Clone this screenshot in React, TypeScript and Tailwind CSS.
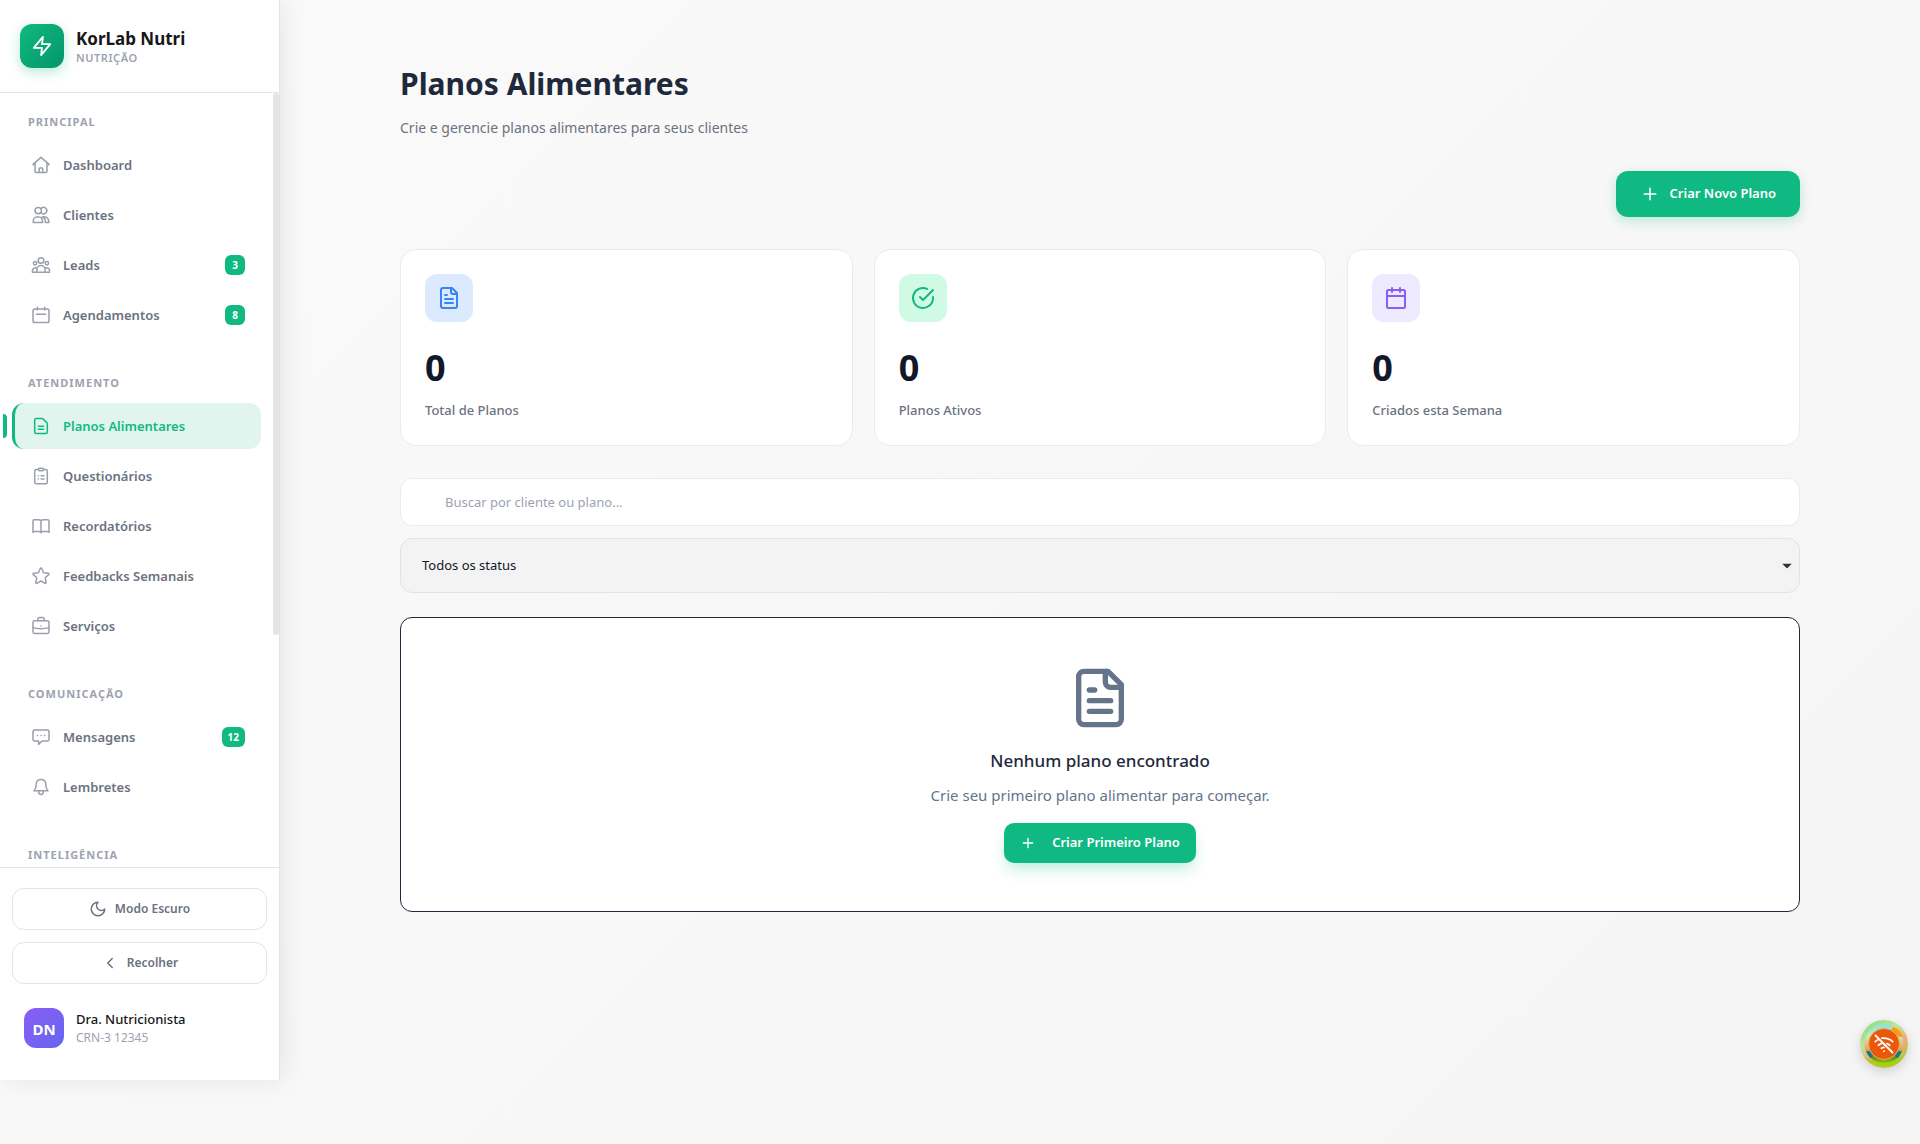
import { useState, type ReactNode } from "react";

type IconProps = { className?: string; children: ReactNode };

function NavIcon({ className = "", children }: IconProps) {
  return (
    <svg
      viewBox="0 0 20 20"
      className={`size-5 shrink-0 ${className}`}
      fill="none"
      stroke="currentColor"
      strokeWidth="1.5"
      strokeLinecap="round"
      strokeLinejoin="round"
      aria-hidden="true"
    >
      {children}
    </svg>
  );
}

function Icon24({ className = "", children, width = 2 }: IconProps & { width?: number }) {
  return (
    <svg
      viewBox="0 0 24 24"
      className={`shrink-0 ${className}`}
      fill="none"
      stroke="currentColor"
      strokeWidth={width}
      strokeLinecap="round"
      strokeLinejoin="round"
      aria-hidden="true"
    >
      {children}
    </svg>
  );
}

const fileText = (
  <>
    <path d="M15 2H6a2 2 0 0 0-2 2v16a2 2 0 0 0 2 2h12a2 2 0 0 0 2-2V7Z" />
    <path d="M14 2v4a2 2 0 0 0 2 2h4" />
    <path d="M10 9H8M16 13H8M16 17H8" />
  </>
);

const calendar = (
  <>
    <path d="M8 2v4M16 2v4" />
    <rect x="3" y="4" width="18" height="18" rx="1.5" />
    <path d="M3 10h18" />
  </>
);

const circleCheck = (
  <>
    <path d="M22 11.08V12a10 10 0 1 1-5.93-9.14" />
    <path d="m22 4-10 10.01-3-3" />
  </>
);

type Item = { label: string; icon: ReactNode; badge?: number; active?: boolean };

const sections: { title: string; items: Item[] }[] = [
  {
    title: "PRINCIPAL",
    items: [
      {
        label: "Dashboard",
        icon: (
          <>
            <path d="M2.2 10v-.9L10 2.4l7.8 6.7v.9" />
            <path d="M4 8v8.3c0 .7.5 1.2 1.2 1.2h9.6c.7 0 1.2-.5 1.2-1.2V8" />
            <path d="M8.2 17.4v-3.6c0-.5.3-.8.8-.8h2c.5 0 .8.3.8.8v3.6" />
          </>
        ),
      },
      {
        label: "Clientes",
        icon: (
          <>
            <circle cx="7.2" cy="5.6" r="3.2" />
            <path d="M10.6 3.1a3.2 3.2 0 1 1 0 5" />
            <path d="M2.2 17.5v-1.1c0-2.6 2-4.6 4.6-4.6s4.8 2 4.8 4.6v1.1z" />
            <path d="M11 11.9c3.4-.7 6.8 1.3 6.8 4.5v1.1h-3.4v-1.1c0-2-1.2-3.7-3.4-4.5z" />
          </>
        ),
      },
      {
        label: "Leads",
        badge: 3,
        icon: (
          <>
            <circle cx="10" cy="5.5" r="2.8" />
            <circle cx="4.1" cy="8.3" r="1.7" />
            <circle cx="15.9" cy="8.3" r="1.7" />
            <path d="M5.9 17.2v-2.6a4.1 4.1 0 0 1 8.2 0v2.6z" />
            <path d="M5.6 12.7c-2.4-.3-4.2 1-4.2 3v1.5h4.5M14.4 12.7c2.4-.3 4.2 1 4.2 3v1.5h-4.5" />
          </>
        ),
      },
      {
        label: "Agendamentos",
        badge: 8,
        icon: (
          <>
            <rect x="2" y="4" width="16" height="13.6" rx="1.8" />
            <path d="M6.3 2.2v2.9M13.7 2.2v2.9M5.4 9.2h9.2" />
          </>
        ),
      },
    ],
  },
  {
    title: "ATENDIMENTO",
    items: [
      {
        label: "Planos Alimentares",
        active: true,
        icon: (
          <>
            <path d="M11.4 2.4H5.2c-.9 0-1.5.6-1.5 1.5v12.2c0 .9.6 1.5 1.5 1.5h9.6c.9 0 1.5-.6 1.5-1.5V7.3z" />
            <path d="M7.4 10.2h5.2M7.4 13.2h5.2" />
          </>
        ),
      },
      {
        label: "Questionários",
        icon: (
          <>
            <path d="M7.4 3.4H5.2c-.9 0-1.5.6-1.5 1.5v11.3c0 .9.6 1.5 1.5 1.5h9.6c.9 0 1.5-.6 1.5-1.5V4.9c0-.9-.6-1.5-1.5-1.5h-2.2" />
            <path d="M8.6 2.2h2.8c.7 0 1.2.5 1.2 1.2s-.5 1.4-1.2 1.4H8.6c-.7 0-1.2-.7-1.2-1.4s.5-1.2 1.2-1.2z" />
            <path d="M7.3 9.8h.1M7.3 13h.1M10.2 9.8h2.8M10.2 13h2.8" />
          </>
        ),
      },
      {
        label: "Recordatórios",
        icon: (
          <>
            <path d="M10 4.800c-.6-.7-1.500-1-2.600-1H3.200c-.8 0-1.200.5-1.200 1.200v11.300c.6-.5 1.200-.8 2-.8h3.700c1 0 1.800.3 2.300.9" />
            <path d="M10 4.800c.6-.7 1.500-1 2.600-1h4.200c.8 0 1.200.5 1.200 1.200v11.300c-.6-.5-1.200-.8-2-.8h-3.700c-1 0-1.800.3-2.300.9z" />
          </>
        ),
      },
      {
        label: "Feedbacks Semanais",
        icon: (
          <path d="M9.300 2.500c.3-.6 1.100-.6 1.400 0l1.900 4.300 4.700.5c.7.1.9.8.4 1.300l-3.500 3.200 1 4.700c.1.6-.5 1.100-1.100.8L10 15l-4.100 2.300c-.6.3-1.200-.2-1.100-.8l1-4.700-3.500-3.200c-.5-.5-.3-1.200.4-1.300l4.700-.5z" />
        ),
      },
      {
        label: "Serviços",
        icon: (
          <>
            <rect x="2" y="4.8" width="16" height="12.6" rx="1.6" />
            <path d="M6.800 4.700V3.600c0-1.200.9-2 2-2h2.400c1.100 0 2 .8 2 2v1.100" />
            <path d="M2 11.600c2.500.8 5.200 1.100 8 1.100s5.500-.3 8-1.100M10 10h.05" />
          </>
        ),
      },
    ],
  },
  {
    title: "COMUNICAÇÃO",
    items: [
      {
        label: "Mensagens",
        badge: 12,
        icon: (
          <>
            <path d="M3.500 3h13c.9 0 1.500.6 1.500 1.500v8c0 .9-.6 1.500-1.500 1.500h-5.400l-3.500 3.400V14H3.500c-.9 0-1.500-.6-1.500-1.500v-8C2 3.600 2.600 3 3.500 3z" />
            <path d="M6.500 8.500h.05M10 8.500h.05M13.500 8.500h.05" />
          </>
        ),
      },
      {
        label: "Lembretes",
        icon: (
          <>
            <path d="M10 2.500c-3 0-4.800 2.200-4.800 5 0 3.400-.9 5-2.200 6.300h14c-1.300-1.300-2.200-2.900-2.200-6.300 0-2.800-1.800-5-4.800-5z" />
            <path d="M7.800 14v1.300a2.200 2.200 0 0 0 4.400 0V14" />
          </>
        ),
      },
    ],
  },
  { title: "INTELIGÊNCIA", items: [] },
];

function NavLink({ label, icon, badge, active }: Item) {
  return (
    <li className="relative">
      {active && <span className="absolute top-[11px] -left-[9px] h-6 w-1 rounded-r bg-[#10b981]" />}
      <a
        href="#"
        aria-current={active ? "page" : undefined}
        className={
          active
            ? "flex h-[46px] items-center gap-3 rounded-xl border-l-[3px] border-[#10b981] bg-[#e1f5ee] px-4 text-[#10b981]"
            : "flex h-[46px] items-center gap-3 rounded-xl border-l-[3px] border-transparent px-4 text-[#6b7280]"
        }
      >
        <NavIcon className={active ? "" : "text-[#9a9fab]"}>{icon}</NavIcon>
        <span className="flex-1 text-[13px] leading-5 font-semibold">{label}</span>
        {badge && (
          <span className="flex h-5 min-w-5 items-center justify-center rounded-md bg-[#10b981] px-1.5 text-[10px] font-bold text-white">
            {badge}
          </span>
        )}
      </a>
    </li>
  );
}

function Sidebar() {
  return (
    <aside className="relative z-10 flex h-[calc(100vh-64px)] w-[280px] shrink-0 flex-col border-r border-[#e5e5e5] bg-white shadow-[4px_0_24px_rgba(0,0,0,0.08)]">
      <div className="flex items-center gap-3 border-b border-[#e5e5e5] px-5 py-6">
        <div className="flex size-11 items-center justify-center rounded-xl bg-linear-135 from-[#10b981] to-[#059669] text-white shadow-[0_4px_12px_rgba(16,185,129,0.3)]">
          <Icon24 className="size-[22px]">
            <path d="M13 2 3 14h9l-1 8 10-12h-9l1-8z" />
          </Icon24>
        </div>
        <div>
          <p className="text-[17px] leading-6 font-bold text-[#171717]">KorLab Nutri</p>
          <p className="text-[11px] leading-[14px] font-semibold tracking-wider text-[#9ca3af]">NUTRIÇÃO</p>
        </div>
      </div>

      <div className="relative min-h-0 flex-1">
        <nav className="h-full overflow-y-auto pt-5 pr-[18px] pl-3 [scrollbar-width:none]">
          {sections.map((s) => (
            <section key={s.title} className="mb-9">
              <h2 className="mb-[11px] pl-4 text-[11px] leading-[18px] font-bold tracking-[1px] text-[#9ca3af]">
                {s.title}
              </h2>
              <ul className="flex flex-col gap-1">
                {s.items.map((i) => (
                  <NavLink key={i.label} {...i} />
                ))}
              </ul>
            </section>
          ))}
        </nav>
        <div className="absolute top-0 right-0 h-[70%] w-1.5 rounded-full bg-[#e5e5e5]" />
      </div>

      <div className="flex flex-col gap-3 border-t border-[#e5e5e5] px-3 py-5">
        <button className="flex h-[42px] items-center justify-center gap-2 rounded-xl border border-[#e5e5e5] text-xs font-semibold text-[#6b7280]">
          <Icon24 className="size-[18px]">
            <path d="M12 3a6 6 0 0 0 9 9 9 9 0 1 1-9-9z" />
          </Icon24>
          Modo Escuro
        </button>
        <button className="flex h-[42px] items-center justify-center gap-2 rounded-xl border border-[#e5e5e5] text-xs font-semibold text-[#6b7280]">
          <Icon24 className="size-[18px]">
            <path d="m15 18-6-6 6-6" />
          </Icon24>
          Recolher
        </button>
        <div className="flex items-center gap-3 p-3">
          <div className="flex size-10 items-center justify-center rounded-xl bg-linear-135 from-[#8b5cf6] to-[#6366f1] pt-0.5 text-[15px] font-bold text-white">
            DN
          </div>
          <div>
            <p className="text-[13px] leading-5 font-medium text-[#171717]">Dra. Nutricionista</p>
            <p className="text-xs leading-[18px] text-[#9ca3af]">CRN-3 12345</p>
          </div>
        </div>
      </div>
    </aside>
  );
}

function StatCard({ tile, icon, label }: { tile: string; icon: ReactNode; label: string }) {
  return (
    <article className="rounded-2xl border border-[#ebebeb] bg-white p-6">
      <div className={`flex size-12 items-center justify-center rounded-xl ${tile}`}>
        <Icon24 className="size-6">{icon}</Icon24>
      </div>
      <p className="mt-6 text-4xl leading-[44px] font-bold text-[#111827]">0</p>
      <p className="mt-2.5 mb-px text-[13px] leading-5 font-medium text-[#6b7280]">{label}</p>
    </article>
  );
}

function OfflineBadge() {
  return (
    <button
      aria-label="Sem conexão"
      className="fixed right-3 bottom-19 z-20 flex size-12 items-center justify-center rounded-full shadow-[0_4px_12px_rgba(0,0,0,0.15)]"
    >
      <svg viewBox="0 0 48 48" className="size-12" fill="none" aria-hidden="true">
        <defs>
          <linearGradient id="ring" x1="8" y1="2" x2="36" y2="46" gradientUnits="userSpaceOnUse">
            <stop offset="0" stopColor="#86e08a" />
            <stop offset="0.35" stopColor="#c4e29a" />
            <stop offset="0.65" stopColor="#f2a97c" />
            <stop offset="1" stopColor="#a3cf3a" />
          </linearGradient>
          <linearGradient id="inner" x1="24" y1="5" x2="24" y2="44" gradientUnits="userSpaceOnUse">
            <stop offset="0" stopColor="#8be3dd" />
            <stop offset="0.3" stopColor="#c9ecb0" />
            <stop offset="0.6" stopColor="#f0a06c" />
            <stop offset="0.85" stopColor="#5d9a10" />
            <stop offset="1" stopColor="#a4cc12" />
          </linearGradient>
        </defs>
        <circle cx="24" cy="24" r="24" fill="url(#ring)" />
        <circle cx="24" cy="24" r="19.5" fill="url(#inner)" />
        <path d="M33 7c5 1.500 8.500 5 9.500 10l-7-1c-.5-3-1.500-4.500-4-6z" fill="#fb9a0c" />
        <path d="M6 31.500l5.500-1 3 5-4.500 2.500zM42 31.500l-5.500-1-3 5 4.500 2.500z" fill="#0f7d86" />
        <path d="M4 36c4 6.500 11 10.500 20 10.500S40 42.500 44 36c-5 4-12 7-20 7S9 40 4 36z" fill="#a8cf14" />
        <circle cx="24" cy="24" r="15.5" fill="#ea580c" stroke="#f0b05c" />
        <g stroke="#fff" strokeWidth="1.8" strokeLinecap="round" strokeLinejoin="round">
          <path d="M15.500 15.500l17 17M22 18.200c4.200-.4 7.800.9 10.700 3.400M15.300 21.600c1-.9 2-1.600 3.100-2.100M18.400 25.200c1.100-.9 2.300-1.600 3.500-1.900M27 23.600c1 .3 1.900.9 2.700 1.600M21.400 28.200c.8-.6 1.600-.9 2.600-.9M24 31.200h.05" />
        </g>
      </svg>
    </button>
  );
}

const plus = <path d="M5 12h14M12 5v14" />;

export default function App() {
  const [query, setQuery] = useState("");
  return (
    <div className="flex min-h-screen bg-linear-135 from-[#fafafa] to-[#f5f5f5] font-['Noto_Sans','Open_Sans',sans-serif]">
      <Sidebar />
      <main className="flex-1 px-12 py-16">
        <div className="mx-auto flex max-w-[1400px] flex-col">
          <header>
            <h1 className="text-3xl leading-10 font-bold text-[#1e293b]">Planos Alimentares</h1>
            <p className="mt-3 text-sm leading-6 text-[#6b7280]">
              Crie e gerencie planos alimentares para seus clientes
            </p>
          </header>

          <button className="mt-[31px] flex h-[46px] items-center gap-2.5 self-end rounded-xl bg-[#10b981] px-6 text-[13px] font-semibold text-white shadow-[0_4px_12px_rgba(16,185,129,0.25)]">
            <Icon24 className="size-5" width={1.8}>
              {plus}
            </Icon24>
            Criar Novo Plano
          </button>

          <div className="mt-8 grid grid-cols-3 gap-[21px]">
            <StatCard tile="bg-[#dbeafe] text-[#3b82f6]" icon={fileText} label="Total de Planos" />
            <StatCard tile="bg-[#d1fae5] text-[#10b981]" icon={circleCheck} label="Planos Ativos" />
            <StatCard tile="bg-[#ede9fe] text-[#8b5cf6]" icon={calendar} label="Criados esta Semana" />
          </div>

          <input
            type="text"
            aria-label="Buscar por cliente ou plano"
            placeholder="Buscar por cliente ou plano..."
            value={query}
            onChange={(e) => setQuery(e.target.value)}
            className="mt-8 h-12 w-full rounded-xl border border-[#ebebeb] bg-white pr-4 pl-11 text-[13px] text-[#111827] placeholder:text-[#9ca3af]"
          />

          <div className="relative mt-3">
            <select
              aria-label="Status"
              className="h-[55px] w-full appearance-none rounded-xl border border-[#e2e3e5] bg-[#f3f3f3] px-[21px] text-[13px] text-[#111827]"
            >
              <option>Todos os status</option>
            </select>
            <svg
              viewBox="0 0 10 5"
              className="pointer-events-none absolute top-1/2 right-2 h-[5px] w-2.5 -translate-y-1/2 text-[#2e3436]"
              aria-hidden="true"
            >
              <path d="M0 0h10L5 5z" fill="currentColor" />
            </svg>
          </div>

          <section className="mt-6 flex flex-col items-center rounded-xl border border-[#1e293b] bg-white py-12">
            <Icon24 className="size-16 text-[#64748b]">{fileText}</Icon24>
            <h2 className="mt-[17px] text-[17px] leading-7 font-medium text-[#1e293b]">Nenhum plano encontrado</h2>
            <p className="mt-2 text-[15px] leading-6 text-[#64748b]">
              Crie seu primeiro plano alimentar para começar.
            </p>
            <button className="mt-4 flex h-10 items-center gap-4 rounded-[10px] bg-[#10b981] px-4 text-[13px] font-semibold text-white shadow-[0_8px_16px_-3px_rgba(16,185,129,0.3)]">
              <Icon24 className="size-4">{plus}</Icon24>
              Criar Primeiro Plano
            </button>
          </section>
        </div>
      </main>
      <OfflineBadge />
    </div>
  );
}
